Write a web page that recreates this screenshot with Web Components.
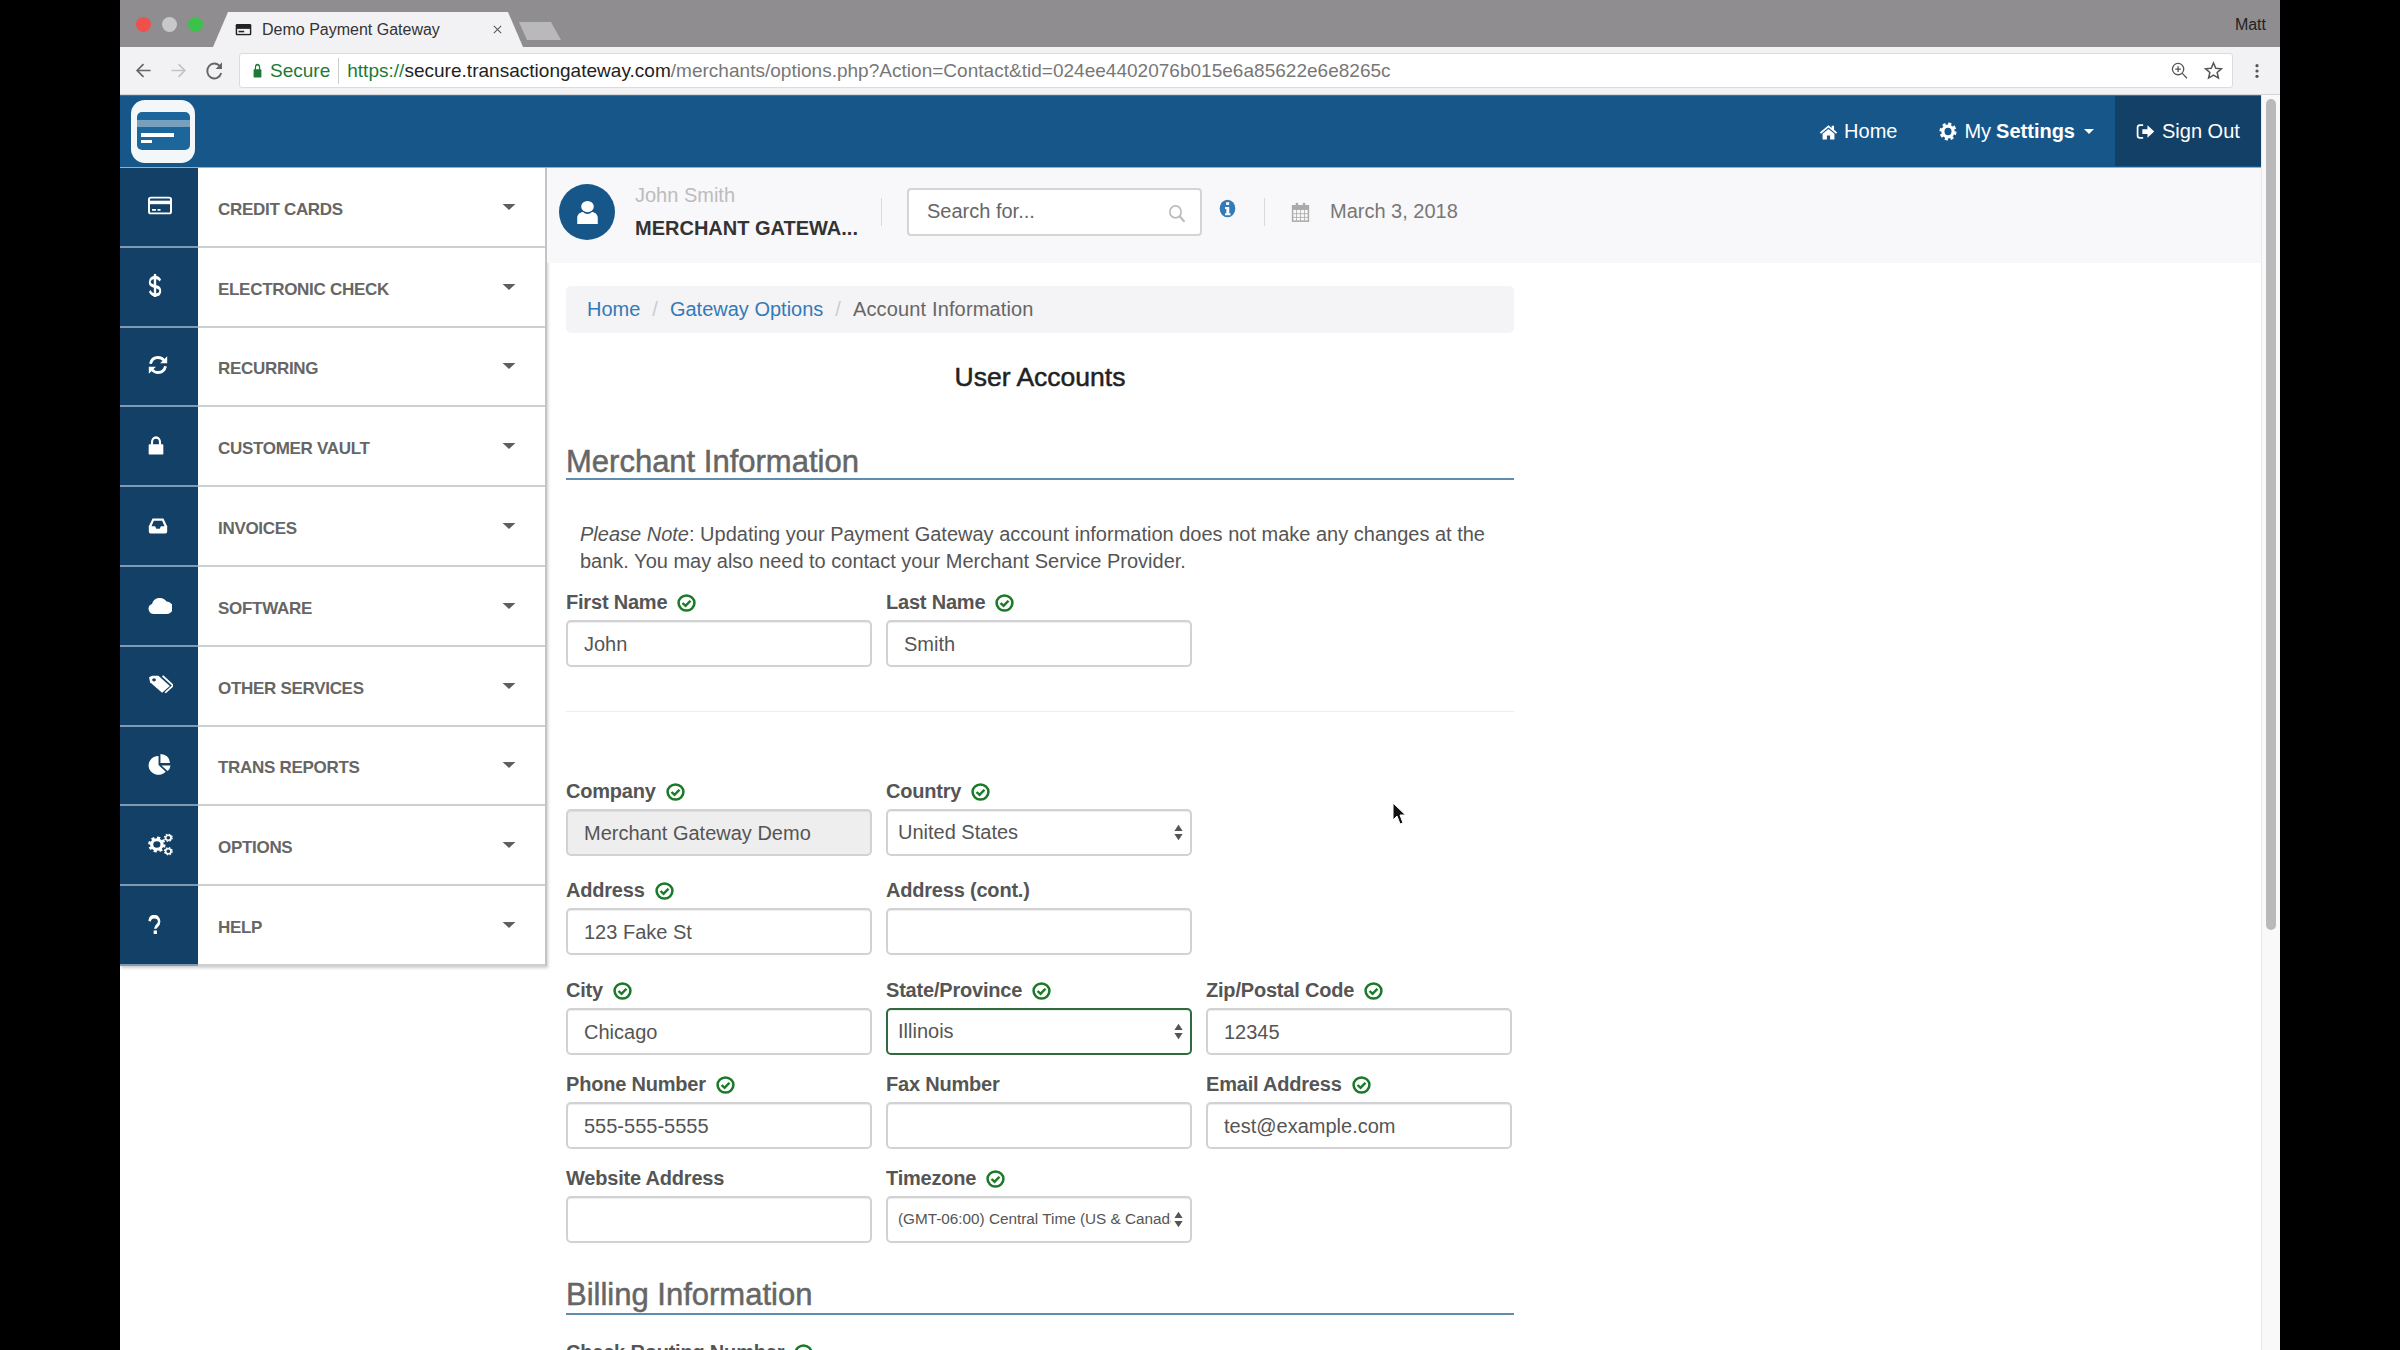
<!DOCTYPE html>
<html>
<head>
<meta charset="utf-8">
<title>Demo Payment Gateway</title>
<style>
  html, body { margin: 0; height: 100%; overflow: hidden; background: #000; }
  body { font-family: "Liberation Sans", Arial, sans-serif; }
</style>
</head>
<body>
<gateway-window>
  <browser-chrome></browser-chrome>
  <div slot="nav"><top-nav></top-nav></div>
  <side-nav slot="side">
    <nav-item icon="card">CREDIT CARDS</nav-item>
    <nav-item icon="dollar">ELECTRONIC CHECK</nav-item>
    <nav-item icon="refresh">RECURRING</nav-item>
    <nav-item icon="lock">CUSTOMER VAULT</nav-item>
    <nav-item icon="inbox">INVOICES</nav-item>
    <nav-item icon="cloud">SOFTWARE</nav-item>
    <nav-item icon="tags">OTHER SERVICES</nav-item>
    <nav-item icon="pie">TRANS REPORTS</nav-item>
    <nav-item icon="cogs">OPTIONS</nav-item>
    <nav-item icon="question">HELP</nav-item>
  </side-nav>
  <div slot="main">
    <info-bar></info-bar>
    <account-form></account-form>
  </div>
</gateway-window>

<script>
const gear = (cx, cy, r) => `
  <circle cx="${cx}" cy="${cy}" r="${r}" fill="none" stroke="currentColor" stroke-width="${r * 0.62}"/>
  <circle cx="${cx}" cy="${cy}" r="${r * 1.42}" fill="none" stroke="currentColor" stroke-width="${r * 0.5}"
    stroke-dasharray="${r * 0.6} ${r * 0.515}"/>`;

const ICONS = {
  card: `<rect x="1" y="3" width="22" height="18" rx="2" fill="none" stroke="currentColor" stroke-width="2"/><rect x="1" y="6.5" width="22" height="4" fill="currentColor"/><rect x="4" y="16" width="4" height="2" fill="currentColor"/><rect x="9.5" y="16" width="3" height="2" fill="currentColor"/>`,
  dollar: `<path d="M21 7C19 4 15 3.500 12 3.500 7 3.500 3 5.500 3 8.600c0 6 18 2.400 18 8.800 0 3-4 4.400-9 4.400-4 0-7-1.500-9-4" fill="none" stroke="currentColor" stroke-width="3.400"/><rect x="10" y="0" width="4" height="24" fill="currentColor"/>`,
  refresh: `<path d="M3 10.500C4 6 7.600 3 12 3c2.800 0 5.200 1.200 7 3.200" fill="none" stroke="currentColor" stroke-width="3.400"/><path d="M23 1.500V10h-8.500z" fill="currentColor"/><path d="M21 13.500C20 18 16.400 21 12 21c-2.800 0-5.200-1.200-7-3.200" fill="none" stroke="currentColor" stroke-width="3.400"/><path d="M1 22.500V14h8.500z" fill="currentColor"/>`,
  lock: `<path d="M6 11V8a6 6 0 0 1 12 0v3" fill="none" stroke="currentColor" stroke-width="3.200"/><rect x="1" y="10.500" width="22" height="13" rx="1.500" fill="currentColor"/>`,
  inbox: `<path d="M5.500 3h13L23 13v7a2 2 0 0 1-2 2H3a2 2 0 0 1-2-2v-7z" fill="currentColor"/><path d="M7 6h10l2.800 7h-4.300l-1.500 3h-4l-1.500-3H4.200z" fill="#134066"/>`,
  cloud: `<path d="M6 22a5.500 5.500 0 0 1-2-10.600A8 8 0 0 1 18.500 8.800 6.600 6.600 0 0 1 18 22z" fill="currentColor"/>`,
  tags: `<path d="M1 3.500 4 2h6l11 11-7.500 7.500L2 9z" fill="currentColor"/><circle cx="5.800" cy="6.300" r="1.800" fill="#134066"/><path d="M14 2l10 10.500-7.500 8" fill="none" stroke="currentColor" stroke-width="1.800"/>`,
  pie: `<path d="M11 3.200V13l7.500 7.500A10.300 10.300 0 1 1 11 3.200z" fill="currentColor"/><path d="M13 1a10 10 0 0 1 10 10H13z" fill="currentColor"/><path d="M14 13.500h9.500A10 10 0 0 1 20.500 19.700z" fill="currentColor"/>`,
  cogs: gear(8.500, 12, 5) + gear(19.500, 5, 2.600) + gear(19.500, 19, 2.600),
  question: `<path d="M3 8C3.500 4 7 2 11.500 2c5 0 9 2.500 9 6.500 0 5-7 5-7 9" fill="none" stroke="currentColor" stroke-width="4.600"/><rect x="10.500" y="19.500" width="6" height="4.500" fill="currentColor"/>`,
  home: `<path d="M12 3 1 12.500l1.500 1.700L12 6l9.500 8.200 1.500-1.700-4-3.500V3.500h-3v3z" fill="currentColor"/><path d="M12 8 4.500 14.300V22h5.500v-5.500h4V22h5.500v-7.700z" fill="currentColor"/>`,
  gear: gear(12, 12, 6.800),
  signout: `<path d="M9 4H5a3 3 0 0 0-3 3v10a3 3 0 0 0 3 3h4" fill="none" stroke="currentColor" stroke-width="2.200"/><path d="M8 9h6.500V4L23 12l-8.500 8v-5H8z" fill="currentColor"/>`,
  user: `<circle cx="12" cy="7" r="5.200" fill="currentColor"/><path d="M3.500 23v-5.500c0-3.500 2.500-5.500 5-5.500 1 1.300 2 1.800 3.500 1.800s2.500-.5 3.500-1.800c2.500 0 5 2 5 5.500V23z" fill="currentColor"/>`,
  search: `<circle cx="10" cy="10" r="7.500" fill="none" stroke="currentColor" stroke-width="2.200"/><path d="M15.500 15.500 22 22.500" stroke="currentColor" stroke-width="2.800"/>`,
  info: `<circle cx="12" cy="12" r="11" fill="currentColor"/><rect x="10" y="4" width="4.400" height="3.600" fill="#f8f7f9"/><path d="M8.500 10h6v8h1.800v2.500H8.500V18h1.800v-5.500H8.500z" fill="#f8f7f9"/>`,
  calendar: `<rect x="2" y="4.500" width="20" height="18.500" fill="none" stroke="currentColor" stroke-width="1.800"/><rect x="2" y="4.500" width="20" height="5" fill="currentColor"/><rect x="6" y="1" width="3" height="5.500" fill="currentColor"/><rect x="15" y="1" width="3" height="5.500" fill="currentColor"/><path d="M2 14h20M2 18.500h20M7 9.500V23M12 9.500V23M17 9.500V23" stroke="currentColor" stroke-width="1"/>`,
  check: `<circle cx="12" cy="12" r="10" fill="none" stroke="currentColor" stroke-width="3.200"/><path d="M7 12l3.800 3.800L17 9" fill="none" stroke="currentColor" stroke-width="3.200"/>`,
  caret: `<path d="M1 5h22L12 19z" fill="currentColor"/>`,
  updown: `<path d="M12 1 23 10H1zM12 23 1 14h22z" fill="currentColor"/>`,
  back: `<path d="M22 12H4M12 3l-9 9 9 9" fill="none" stroke="currentColor" stroke-width="2.400"/>`,
  forward: `<path d="M2 12h18M12 3l9 9-9 9" fill="none" stroke="currentColor" stroke-width="2.400"/>`,
  reload: `<path d="M20.500 14.500A9 9 0 1 1 19 6.500" fill="none" stroke="currentColor" stroke-width="2.400"/><path d="M21.500 1.500V9.500h-8z" fill="currentColor"/>`,
  padlock: `<path d="M7.500 11V7a4.500 4.500 0 0 1 9 0v4" fill="none" stroke="currentColor" stroke-width="2.600"/><rect x="3.500" y="10" width="17" height="13" rx="1.500" fill="currentColor"/>`,
  zoom: `<circle cx="10" cy="10" r="8" fill="none" stroke="currentColor" stroke-width="1.800"/><path d="M16 16l6.500 7M10 6v8M6 10h8" fill="none" stroke="currentColor" stroke-width="1.800"/>`,
  star: `<path d="M12 2.500l2.900 6.600 7.100.7-5.400 4.700 1.600 7-6.200-3.700-6.200 3.700 1.600-7L2 9.800l7.100-.7z" fill="none" stroke="currentColor" stroke-width="1.900"/>`,
  kebab: `<circle cx="12" cy="4" r="2.400" fill="currentColor"/><circle cx="12" cy="12" r="2.400" fill="currentColor"/><circle cx="12" cy="20" r="2.400" fill="currentColor"/>`,
  favicon: `<rect x="1" y="3" width="22" height="18" rx="2" fill="currentColor"/><rect x="3" y="11" width="18" height="8" fill="#f2f1f3"/><rect x="5" y="14" width="8" height="2.500" fill="currentColor"/>`,
  close: `<path d="M4 4l16 16M20 4 4 20" stroke="currentColor" stroke-width="2.200"/>`
};

class UiIcon extends HTMLElement {
  connectedCallback() {
    const w = this.getAttribute("w") || 16;
    const h = this.getAttribute("h") || w;
    this.attachShadow({mode: "open"}).innerHTML = `
      <style>
        :host { display: inline-flex; flex: none; width: ${w}px; height: ${h}px; }
        svg { display: block; width: 100%; height: 100%; }
      </style>
      <svg viewBox="0 0 24 24" preserveAspectRatio="none">${ICONS[this.getAttribute("name")]}</svg>`;
  }
}
customElements.define("ui-icon", UiIcon);

class GatewayWindow extends HTMLElement {
  constructor() {
    super();
    this.attachShadow({mode: "open"}).innerHTML = `
      <style>
        :host {
          display: block;
          position: relative;
          width: 2160px;
          height: 1350px;
          margin-left: 120px;
          overflow: hidden;
          background: #fff;
          font-family: "Liberation Sans", Arial, sans-serif;
        }
        #below { display: flex; height: 1255px; }
        #page { width: 2141px; }
        #row { display: flex; height: 1087px; }
        ::slotted([slot="main"]) { flex: 1; min-width: 0; }
        #track {
          width: 18px;
          border-left: 1px solid #e9e9e9;
          background: #f9f9f9;
        }
        #thumb {
          width: 10px;
          height: 831px;
          margin: 4px 0 0 4px;
          border-radius: 5px;
          background: #b9b8ba;
        }
        #cursor { position: absolute; left: 1272px; top: 802px; width: 14px; height: 24px; }
      </style>
      <slot></slot>
      <div id="below">
        <div id="page">
          <slot name="nav"></slot>
          <div id="row"><slot name="side"></slot><slot name="main"></slot></div>
        </div>
        <div id="track"><div id="thumb"></div></div>
      </div>
      <svg id="cursor" viewBox="0 0 14 24">
        <path d="M1 1v17l4-4 3 8 3-1-3-8h5.500z" fill="#111" stroke="#fff" stroke-width="1"/>
      </svg>`;
  }
}
customElements.define("gateway-window", GatewayWindow);

class BrowserChrome extends HTMLElement {
  constructor() {
    super();
    this.attachShadow({mode: "open"}).innerHTML = `
      <style>
        :host { display: block; }
        #title {
          display: flex;
          height: 47px;
          background: #8f8d8f;
          position: relative;
          align-items: flex-end;
        }
        #lights { display: flex; gap: 11px; margin: 0 0 15px 16px; align-self: flex-end; }
        #lights i { display: block; width: 15px; height: 15px; border-radius: 50%; }
        #tab {
          width: 310px;
          height: 35px;
          margin-left: 10px;
          background: #f2f1f3;
          clip-path: polygon(0 100%, 15px 0, 295px 0, 100% 100%);
          display: flex;
          align-items: center;
          box-sizing: border-box;
          padding: 0 20px 0 22px;
          font-size: 16px;
          color: #333;
        }
        #tab ui-icon:first-child { margin-right: 10px; color: #222; }
        #tab span { flex: 1; }
        #tab ui-icon:last-child { color: #555; }
        #newtab {
          width: 42px;
          height: 18px;
          margin: 0 0 7px -4px;
          background: #b9b8ba;
          clip-path: polygon(0 0, 32px 0, 100% 100%, 8px 100%);
        }
        #user { margin: 0 14px 13px auto; font-size: 16px; color: #222; }
        #tools {
          display: flex;
          align-items: center;
          height: 48px;
          box-sizing: border-box;
          background: #f2f1f3;
          border-bottom: 1px solid #d5d5d7;
          color: #666;
        }
        #tools > ui-icon { margin-left: 15px; }
        #tools > ui-icon.light { color: #c4c4c6; margin-left: 18px; }
        #tools > ui-icon.reload { margin-left: 18px; }
        #omni {
          display: flex;
          align-items: center;
          width: 1994px;
          height: 35px;
          margin-left: 15px;
          box-sizing: border-box;
          border: 1px solid #dcdcde;
          border-radius: 3px;
          background: #fff;
          font-size: 19px;
          white-space: nowrap;
          color: #777;
        }
        #omni .lock { color: #1d7a36; margin: 0 7px 0 12px; }
        #secure { color: #1d7a36; padding-right: 8px; border-right: 1px solid #ccc; line-height: 26px; }
        #url { margin-left: 8px; flex: 1; letter-spacing: .02px; }
        #url b { font-weight: normal; color: #1d7a36; }
        #url em { font-style: normal; color: #222; }
        #omni .zoom { color: #555; margin-right: 16px; }
        #omni .star { color: #555; margin-right: 9px; }
        #tools > ui-icon.kebab { margin-left: 16px; color: #555; }
      </style>
      <div id="title">
        <div id="lights">
          <i style="background:#f0504c"></i><i style="background:#c8c7c9"></i><i style="background:#3cc14a"></i>
        </div>
        <div id="tab">
          <ui-icon name="favicon" w="17" h="15"></ui-icon>
          <span>Demo Payment Gateway</span>
          <ui-icon name="close" w="11" h="11"></ui-icon>
        </div>
        <div id="newtab"></div>
        <div id="user">Matt</div>
      </div>
      <div id="tools">
        <ui-icon name="back" w="17" h="17"></ui-icon>
        <ui-icon class="light" name="forward" w="17" h="17"></ui-icon>
        <ui-icon class="reload" name="reload" w="19" h="20"></ui-icon>
        <div id="omni">
          <ui-icon class="lock" name="padlock" w="11" h="15"></ui-icon>
          <span id="secure">Secure</span>
          <span id="url"><b>https://</b><em>secure.transactiongateway.com</em>/merchants/options.php?Action=Contact&amp;tid=024ee4402076b015e6a85622e6e8265c</span>
          <ui-icon class="zoom" name="zoom" w="17" h="17"></ui-icon>
          <ui-icon class="star" name="star" w="19" h="19"></ui-icon>
        </div>
        <ui-icon class="kebab" name="kebab" w="16" h="16"></ui-icon>
      </div>`;
  }
}
customElements.define("browser-chrome", BrowserChrome);

class TopNav extends HTMLElement {
  constructor() {
    super();
    this.attachShadow({mode: "open"}).innerHTML = `
      <style>
        :host {
          display: flex;
          align-items: center;
          height: 73px;
          box-sizing: border-box;
          background: #175689;
          border-top: 1px solid #3d7199;
          border-bottom: 1px solid #8db4d2;
          color: #fff;
          font-size: 20px;
        }
        #logo {
          width: 64px;
          height: 63px;
          margin-left: 11px;
          border-radius: 14px;
          background: #f4f7fa;
          box-sizing: border-box;
          padding: 12px 5px 0 6px;
        }
        #card {
          height: 38px;
          border-radius: 5px;
          background: #1c669c;
          padding-top: 8px;
          box-sizing: border-box;
        }
        #card i { display: block; background: #fff; }
        #card .band { height: 7px; background: #77a0bf; margin-bottom: 6px; }
        #card .l1 { width: 33px; height: 4px; margin: 0 0 3px 4px; }
        #card .l2 { width: 11px; height: 3px; margin-left: 4px; }
        .link { display: flex; align-items: center; }
        .home { margin-left: auto; }
        .home ui-icon { margin-right: 6px; }
        .settings { margin-left: 42px; }
        .settings ui-icon { margin-right: 7px; }
        .settings b { margin-left: 5px; }
        .settings i {
          width: 0; height: 0; margin-left: 9px;
          border: 5px solid transparent; border-top-color: #fff; border-bottom: 0;
        }
        .out {
          width: 146px;
          height: 70px;
          margin: 0 0 1px 21px;
          box-sizing: border-box;
          padding-left: 21px;
          background: #134066;
        }
        .out ui-icon { margin-right: 7px; }
      </style>
      <div id="logo"><div id="card"><i class="band"></i><i class="l1"></i><i class="l2"></i></div></div>
      <div class="link home"><ui-icon name="home" w="19" h="18"></ui-icon>Home</div>
      <div class="link settings"><ui-icon name="gear" w="18" h="19"></ui-icon>My<b>Settings</b><i></i></div>
      <div class="link out"><ui-icon name="signout" w="19" h="19"></ui-icon>Sign Out</div>`;
  }
}
customElements.define("top-nav", TopNav);

class SideNav extends HTMLElement {
  constructor() {
    super();
    this.attachShadow({mode: "open"}).innerHTML = `
      <style>
        :host {
          display: grid;
          grid-auto-rows: 79.800px;
          align-self: flex-start;
          flex: none;
          width: 427px;
          box-sizing: border-box;
          background: #fff;
          border-right: 2px solid #c4c4c4;
          box-shadow: 1px 2px 3px rgba(0,0,0,.2);
        }
      </style>
      <slot></slot>`;
  }
}
customElements.define("side-nav", SideNav);

const NAV_ICON_SIZES = {
  card: [24, 21], dollar: [14, 23], refresh: [20, 20], lock: [16, 19], inbox: [20, 19],
  cloud: [24, 23], tags: [25, 22], pie: [23, 22], cogs: [25, 23], question: [13, 19]
};

class NavItem extends HTMLElement {
  constructor() {
    super();
    const name = this.getAttribute("icon");
    const [w, h] = NAV_ICON_SIZES[name];
    this.attachShadow({mode: "open"}).innerHTML = `
      <style>
        :host { display: flex; height: 79.800px; box-sizing: border-box; }
        #icon {
          display: flex;
          align-items: center;
          width: 78px;
          box-sizing: border-box;
          padding: 0 0 2px 28px;
          background: #134066;
          border-bottom: 2px solid #7f9ab1;
          color: #fff;
        }
        #label {
          display: flex;
          align-items: center;
          flex: 1;
          box-sizing: border-box;
          padding: 6px 0 0 20px;
          border-bottom: 2px solid #cfcfcf;
          font-size: 17px;
          font-weight: bold;
          letter-spacing: -.3px;
          color: #666;
        }
        #caret { margin-left: auto; margin-right: 29px; margin-top: -6px; color: #5e5e5e; }
      </style>
      <div id="icon"><ui-icon name="${name}" w="${w}" h="${h}"></ui-icon></div>
      <div id="label"><slot></slot><ui-icon id="caret" name="caret" w="14" h="10"></ui-icon></div>`;
  }
}
customElements.define("nav-item", NavItem);

class InfoBar extends HTMLElement {
  constructor() {
    super();
    this.attachShadow({mode: "open"}).innerHTML = `
      <style>
        :host {
          display: flex;
          align-items: center;
          height: 95px;
          box-sizing: border-box;
          padding: 0 0 8px 12px;
          background: #f8f7f9;
          font-size: 20px;
        }
        #avatar {
          display: flex;
          align-items: center;
          justify-content: center;
          width: 56px;
          height: 56px;
          border-radius: 50%;
          background: #175689;
          color: #fff;
        }
        #who { width: 246px; margin-left: 20px; }
        #who div:first-child { color: #bcbcbc; line-height: 26px; margin-bottom: 7px; }
        #who div:last-child { color: #333; font-weight: bold; line-height: 26px; white-space: nowrap; }
        .sep { width: 1px; height: 28px; background: #d9d9d9; }
        #search {
          display: flex;
          align-items: center;
          width: 295px;
          height: 48px;
          margin-left: 25px;
          box-sizing: border-box;
          padding: 0 14px 0 18px;
          border: 2px solid #d4d4d6;
          border-radius: 4px;
          background: #fff;
          color: #666;
        }
        #search span { flex: 1; }
        #search ui-icon { color: #bbb; margin-top: 3px; }
        #info { color: #337ab7; margin: -6px 28px 0 17px; }
        #cal { color: #aaa; margin: 0 20px 0 26px; }
        #date { color: #777; }
      </style>
      <div id="avatar"><ui-icon name="user" w="29" h="26"></ui-icon></div>
      <div id="who"><div>John Smith</div><div>MERCHANT GATEWA...</div></div>
      <div class="sep"></div>
      <div id="search"><span>Search for...</span><ui-icon name="search" w="18" h="19"></ui-icon></div>
      <ui-icon id="info" name="info" w="17" h="19"></ui-icon>
      <div class="sep"></div>
      <ui-icon id="cal" name="calendar" w="19" h="20"></ui-icon>
      <div id="date">March 3, 2018</div>`;
  }
}
customElements.define("info-bar", InfoBar);

class BreadCrumbs extends HTMLElement {
  constructor() {
    super();
    this.attachShadow({mode: "open"}).innerHTML = `
      <style>
        :host {
          display: flex;
          align-items: center;
          height: 47px;
          box-sizing: border-box;
          padding-left: 21px;
          border-radius: 5px;
          background: #f4f3f5;
          font-size: 20px;
          color: #666;
        }
        a { color: #337ab7; text-decoration: none; }
        i { font-style: normal; color: #ccc; margin: 0 12px; }
        span { letter-spacing: .15px; }
      </style>
      <a>Home</a><i>/</i><a>Gateway Options</a><i>/</i><span>Account Information</span>`;
  }
}
customElements.define("bread-crumbs", BreadCrumbs);

class SectionHead extends HTMLElement {
  constructor() {
    super();
    this.attachShadow({mode: "open"}).innerHTML = `
      <style>
        :host {
          display: block;
          box-sizing: border-box;
          height: 36px;
          border-bottom: 2px solid #5f8db0;
          font-size: 31px;
          -webkit-text-stroke: .5px #666;
          line-height: 36px;
          color: #666;
        }
      </style>
      <slot></slot>`;
  }
}
customElements.define("section-head", SectionHead);

class FormRow extends HTMLElement {
  constructor() {
    super();
    this.attachShadow({mode: "open"}).innerHTML = `
      <style>
        :host {
          display: grid;
          grid-template-columns: repeat(3, 306px);
          column-gap: 14px;
        }
      </style>
      <slot></slot>`;
  }
}
customElements.define("form-row", FormRow);

class FormField extends HTMLElement {
  constructor() {
    super();
    const label = this.getAttribute("label");
    const kind = this.getAttribute("kind") || "";
    const check = this.hasAttribute("check") ? `<ui-icon name="check" w="19" h="18"></ui-icon>` : "";
    const arrows = kind.includes("select") ? `<ui-icon class="arrows" name="updown" w="9" h="17"></ui-icon>` : "";
    this.attachShadow({mode: "open"}).innerHTML = `
      <style>
        :host { display: block; height: 76px; }
        #label {
          display: flex;
          align-items: center;
          gap: 10px;
          height: 24px;
          margin-bottom: 5px;
          font-size: 20px;
          font-weight: bold;
          letter-spacing: -.2px;
          color: #555;
        }
        #label ui-icon { color: #1a7a28; }
        #box {
          display: flex;
          align-items: center;
          height: 47px;
          box-sizing: border-box;
          padding: 3px 10px 0 16px;
          border: 2px solid #d2d2d4;
          border-radius: 5px;
          background: #fff;
          box-shadow: inset 0 1px 1px rgba(0,0,0,.075);
          font-size: 20px;
          color: #555;
        }
        #box span { flex: 1; white-space: nowrap; overflow: hidden; }
        .select { padding: 0 7px 0 10px !important; }
        .disabled { background: #eeeeee !important; }
        .focus { border-color: #2f6b3c !important; }
        .small { font-size: 15.300px !important; }
        .small span { margin-right: 3px; }
        .arrows { color: #555; }
      </style>
      <div id="label">${label}${check}</div>
      <div id="box" class="${kind}"><span><slot></slot></span>${arrows}</div>`;
  }
}
customElements.define("form-field", FormField);

class AccountForm extends HTMLElement {
  constructor() {
    super();
    this.attachShadow({mode: "open"}).innerHTML = `
      <style>
        :host {
          display: block;
          width: 948px;
          margin: 23px 0 0 19px;
        }
        h1 {
          height: 36px;
          margin: 26px 0 49px;
          font-size: 26.500px;
          font-weight: normal;
          -webkit-text-stroke: .5px #222;
          line-height: 36px;
          text-align: center;
          color: #222;
        }
        p {
          margin: 41px 0 15.500px;
          padding-left: 14px;
          font-size: 20px;
          line-height: 27px;
          color: #555;
        }
        hr { height: 1px; margin: 44px 0 68px; border: 0; background: #eee; }
        form-row.first { margin-bottom: 23px; }
        form-row.tight { margin-bottom: 24px; }
        form-row.close { margin-bottom: 18px; }
        section-head.billing { height: 38px; margin: 34px 0 26px; }
      </style>
      <bread-crumbs></bread-crumbs>
      <h1>User Accounts</h1>
      <section-head>Merchant Information</section-head>
      <p><em>Please Note</em>: Updating your Payment Gateway account information does not make any changes at the bank. You may also need to contact your Merchant Service Provider.</p>
      <form-row>
        <form-field label="First Name" check>John</form-field>
        <form-field label="Last Name" check>Smith</form-field>
      </form-row>
      <hr>
      <form-row class="first">
        <form-field label="Company" check kind="disabled">Merchant Gateway Demo</form-field>
        <form-field label="Country" check kind="select">United States</form-field>
      </form-row>
      <form-row class="tight">
        <form-field label="Address" check>123 Fake St</form-field>
        <form-field label="Address (cont.)"></form-field>
      </form-row>
      <form-row class="close">
        <form-field label="City" check>Chicago</form-field>
        <form-field label="State/Province" check kind="select focus">Illinois</form-field>
        <form-field label="Zip/Postal Code" check>12345</form-field>
      </form-row>
      <form-row class="close">
        <form-field label="Phone Number" check>555-555-5555</form-field>
        <form-field label="Fax Number"></form-field>
        <form-field label="Email Address" check>test@example.com</form-field>
      </form-row>
      <form-row>
        <form-field label="Website Address"></form-field>
        <form-field label="Timezone" check kind="select small">(GMT-06:00) Central Time (US &amp; Canada)</form-field>
      </form-row>
      <section-head class="billing">Billing Information</section-head>
      <form-row>
        <form-field label="Check Routing Number" check></form-field>
      </form-row>`;
  }
}
customElements.define("account-form", AccountForm);
</script>
</body>
</html>
